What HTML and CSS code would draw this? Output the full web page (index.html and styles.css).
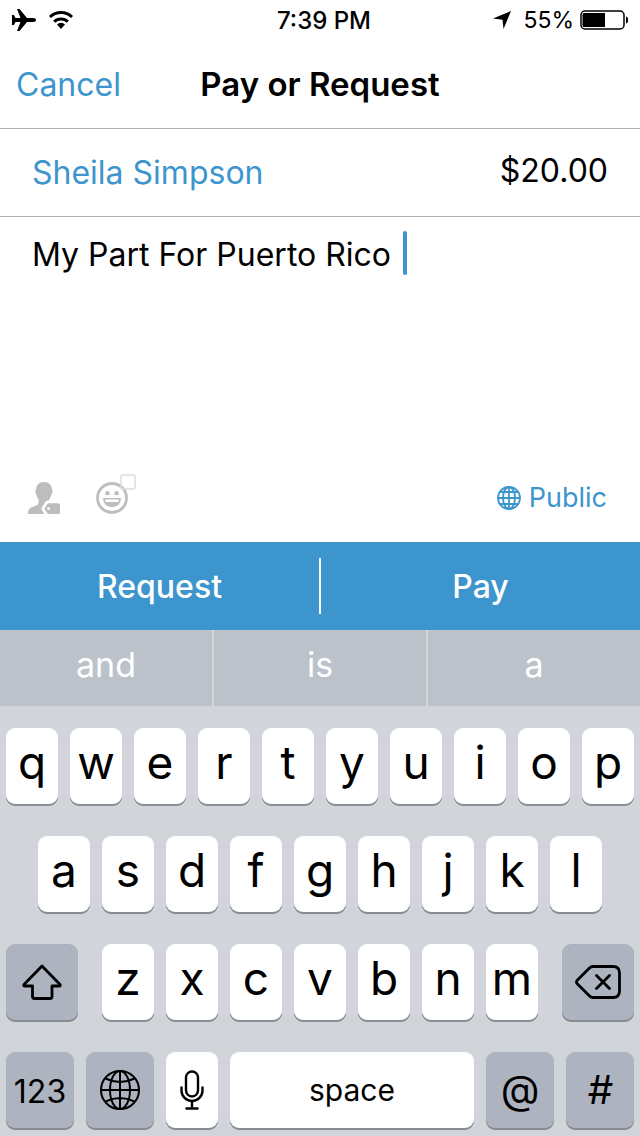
FILE: index.html
```html
<!DOCTYPE html>
<html lang="en">
<head>
<meta charset="utf-8">
<meta name="viewport" content="width=device-width, initial-scale=1">
<title>Pay or Request</title>
<link rel="stylesheet" href="styles.css">
</head>
<body>
<div class="status">
  <div class="status-side">
    <svg width="24" height="24" viewBox="0 0 24 24" aria-label="Airplane mode"><path d="M24 12c0-1.300-1-2-3-2h-6L7.500 1H5l3.500 9H3.500L2 7H0v10h2l1.500-3h5L5 23h2.500L15 14h6c2 0 3-.7 3-2z"/></svg>
    <svg class="wifi" width="26" height="20" viewBox="0 0 26 20" fill="none" stroke="#000" stroke-width="3" aria-label="Wi-Fi"><path d="M2 7a15.500 15.500 0 0 1 22 0M6.200 11.700a9.600 9.600 0 0 1 13.600 0"/><path d="M9 14.500a5.700 5.700 0 0 1 8 0l-4 4.500z" fill="#000" stroke="none"/></svg>
  </div>
  <span class="time">7:39 PM</span>
  <div class="status-side status-right">
    <svg width="18" height="18" viewBox="0 0 18 18" aria-label="Location"><path d="M18 0 10.500 18 9.500 8.800 0 7.500z"/></svg>
    <span class="percent">55%</span>
    <svg width="48" height="20" viewBox="0 0 48 20" aria-label="Battery"><rect x="1" y="1" width="43" height="18" rx="4" fill="none" stroke="#000" stroke-width="1.500"/><path d="M4 3h21v14H4a1.500 1.500 0 0 1-1.500-1.500v-11A1.500 1.500 0 0 1 4 3zM46 6.500c3 1 3 6 0 7z"/></svg>
  </div>
</div>

<header class="header">
  <button class="cancel" type="button">Cancel</button>
  <h1 class="title">Pay or Request</h1>
</header>

<main class="form">
  <div class="recipient-row">
    <button class="recipient" type="button">Sheila Simpson</button>
    <input class="amount" type="text" value="$20.00" aria-label="Amount">
  </div>
  <div class="note">
    <textarea class="note-text" rows="1" aria-label="Note">My Part For Puerto Rico</textarea>
    <span class="caret"></span>
  </div>
  <div class="tools">
    <button class="tool" type="button" aria-label="Tag a friend">
      <svg width="32" height="32" viewBox="0 0 32 32"><path fill="#bdbdbd" d="M16 0c5 0 8 3 8 8 1 .5 1 3-.5 4-.6 3-1.500 4-2.500 5.500V21l7 4v7H0c0-4 1-5.600 4.500-7 3.500-1.200 6-2.200 6-4v-3.500C9.500 16 8.700 14.500 8.200 12c-1.400-1-1.300-3.500-.2-4 0-5 3-8 8-8z"/><path fill="#bdbdbd" stroke="#fff" stroke-width="6" stroke-linejoin="round" paint-order="stroke" d="M20 21.500h10q2 0 2 2V30q0 2-2 2H20l-3.500-5.200z"/><path fill="#bdbdbd" d="M20 21.500h10q2 0 2 2V30q0 2-2 2H20l-3.500-5.200z"/><circle cx="20.500" cy="26.700" r="1.400" fill="#fff"/></svg>
    </button>
    <button class="tool" type="button" aria-label="Add an emoji">
      <svg width="40" height="42" viewBox="0 0 40 42" fill="none"><circle cx="16" cy="26" r="14.500" stroke="#bdbdbd" stroke-width="2.800"/><rect x="25" y="3" width="14" height="14" rx="2" stroke="#dcdcdc" stroke-width="1.500"/><path fill="#bdbdbd" d="M9.200 21.500a2.200 2.400 0 0 1 4.400 0V23H9.200zM18.400 21.500a2.200 2.400 0 0 1 4.400 0V23h-4.400z"/><path d="M7 26h18c-.3 6-4 9-9 9s-8.700-3-9-9z" fill="#bdbdbd"/><path d="M9 27.500h14l-.7 2.500H9.700z" fill="#fff"/></svg>
    </button>
    <button class="audience" type="button">
      <svg width="24" height="24" viewBox="0 0 24 24" fill="none" stroke="#3d95ce" stroke-width="1.800"><circle cx="12" cy="12" r="11"/><ellipse cx="12" cy="12" rx="6" ry="11"/><path d="M12 1v22M1 12h22M3 6h18M3 18h18"/></svg>
      Public
    </button>
  </div>
</main>

<div class="actions">
  <button class="action" type="button">Request</button>
  <span class="divider"></span>
  <button class="action" type="button">Pay</button>
</div>

<div class="suggestions">
  <button class="suggestion" type="button">and</button>
  <button class="suggestion" type="button">is</button>
  <button class="suggestion" type="button">a</button>
</div>

<div class="keyboard">
  <div class="keys keys-top">
    <button class="key" type="button">q</button><button class="key" type="button">w</button><button class="key" type="button">e</button><button class="key" type="button">r</button><button class="key" type="button">t</button><button class="key" type="button">y</button><button class="key" type="button">u</button><button class="key" type="button">i</button><button class="key" type="button">o</button><button class="key" type="button">p</button>
  </div>
  <div class="keys keys-home">
    <button class="key" type="button">a</button><button class="key" type="button">s</button><button class="key" type="button">d</button><button class="key" type="button">f</button><button class="key" type="button">g</button><button class="key" type="button">h</button><button class="key" type="button">j</button><button class="key" type="button">k</button><button class="key" type="button">l</button>
  </div>
  <div class="keys keys-lower">
    <button class="key key-dark" type="button" aria-label="Shift">
      <svg width="40" height="36" viewBox="0 0 40 36" fill="none" stroke="#000" stroke-width="2.800" stroke-linejoin="round"><path d="M20 2 38 20.500q.8 1.500-1 1.500h-7v10.500q0 2-2 2H12.500q-2 0-2-2V22H3q-1.800 0-1-1.500z"/></svg>
    </button>
    <div class="letters">
      <button class="key" type="button">z</button><button class="key" type="button">x</button><button class="key" type="button">c</button><button class="key" type="button">v</button><button class="key" type="button">b</button><button class="key" type="button">n</button><button class="key" type="button">m</button>
    </div>
    <button class="key key-dark" type="button" aria-label="Delete">
      <svg width="46" height="34" viewBox="0 0 46 34" fill="none" stroke="#000" stroke-width="2.800" stroke-linecap="round" stroke-linejoin="round"><path d="M18 1.500h20q6.500 0 6.500 6.500v18q0 6.500-6.500 6.500H18q-2 0-3.500-1.500L2 18.500q-1-1.500 0-3L14.500 3Q16 1.500 18 1.500zM21.500 10.500l13 13M34.500 10.500l-13 13"/></svg>
    </button>
  </div>
  <div class="keys keys-bottom">
    <button class="key key-dark key-word key-numbers" type="button">123</button>
    <button class="key key-dark" type="button" aria-label="Next keyboard">
      <svg width="40" height="40" viewBox="0 0 40 40" fill="none" stroke="#000" stroke-width="2"><circle cx="20" cy="20" r="19"/><ellipse cx="20" cy="20" rx="10" ry="19"/><path d="M20 1v38M1 20h38M5.500 8.500q14.500 7 29 0M5.500 31.500q14.500-7 29 0"/></svg>
    </button>
    <button class="key key-icon" type="button" aria-label="Dictate">
      <svg width="24" height="40" viewBox="0 0 24 40" fill="none" stroke="#000" stroke-width="2.400" stroke-linecap="round"><rect x="6" y="1.500" width="12" height="25" rx="6"/><path d="M1.500 17.500v3a10.500 10.500 0 0 0 21 0v-3M12 31v7M6.500 38.500h11"/></svg>
    </button>
    <button class="key key-word" type="button">space</button>
    <button class="key key-dark key-symbol" type="button">@</button>
    <button class="key key-dark key-symbol key-hash" type="button">#</button>
  </div>
</div>
</body>
</html>
```
FILE: styles.css
```css
* {
  box-sizing: border-box;
}

body {
  margin: 0;
  min-height: 100vh;
  display: flex;
  flex-direction: column;
  background: #fff;
  color: #000;
  font-family: Inter, "Liberation Sans", sans-serif;
  font-size: 32px;
}

button,
input,
textarea {
  margin: 0;
  padding: 0;
  border: 0;
  background: none;
  color: inherit;
  font: inherit;
}

svg {
  display: block;
  flex: none;
}

.status {
  display: grid;
  grid-template-columns: 1fr auto 1fr;
  align-items: center;
  height: 40px;
  padding: 0 12px;
  font-size: 23px;
}

.status-side {
  display: flex;
  align-items: center;
}

.wifi {
  margin-left: 12px;
}

.status-right {
  justify-content: flex-end;
}

.time {
  padding-left: 8px;
  font-size: 24px;
  font-weight: 500;
}

.percent {
  margin: 0 6px 0 12px;
}

.header {
  display: grid;
  grid-template-columns: 1fr auto 1fr;
  align-items: center;
  height: 89px;
  padding: 0 16px;
  border-bottom: 1px solid #b2b2b2;
}

.cancel {
  justify-self: start;
  color: #3d95ce;
}

.title {
  margin: 0;
  font-size: 33px;
  font-weight: 600;
}

.form {
  flex: 1;
  display: flex;
  flex-direction: column;
}

.recipient-row {
  display: flex;
  align-items: center;
  justify-content: space-between;
  height: 88px;
  padding: 0 32px;
  border-bottom: 1px solid #b2b2b2;
}

.recipient {
  color: #3d95ce;
}

.amount {
  width: 200px;
  padding-bottom: 4px;
  text-align: right;
}

.note {
  flex: 1;
  display: flex;
  align-items: flex-start;
  gap: 12px;
  padding: 14px 32px;
}

.note-text {
  field-sizing: content;
  padding-top: 2px;
  line-height: 44px;
  resize: none;
  overflow: hidden;
}

.caret {
  width: 4px;
  height: 44px;
  border-radius: 2px;
  background: #3d95ce;
}

.tools {
  display: flex;
  align-items: flex-end;
  gap: 36px;
  padding: 0 33px 28px 28px;
}

.audience {
  display: flex;
  align-items: center;
  gap: 8px;
  margin-left: auto;
  color: #3d95ce;
  font-size: 27px;
  line-height: 32px;
}

.actions {
  display: grid;
  grid-template-columns: 1fr 2px 1fr;
  height: 88px;
  padding: 16px 0;
  background: #3d95ce;
  color: #fff;
}

.action {
  font-weight: 500;
}

.divider {
  background: #fff;
}

.suggestions {
  display: grid;
  grid-template-columns: repeat(3, 1fr);
  gap: 2px;
  height: 76px;
  background: #d1d5da;
  color: #fff;
}

.suggestion {
  padding-bottom: 8px;
  background: #bbc2ca;
  font-size: 34px;
}

.keyboard {
  display: grid;
  gap: 32px;
  padding: 22px 6px 8px;
  background: #d1d5da;
}

.keys,
.letters {
  display: grid;
  gap: 12px;
}

.keys-top {
  grid-template-columns: repeat(10, 1fr);
}

.keys-home {
  grid-template-columns: repeat(9, 1fr);
  padding: 0 32px;
}

.keys-lower {
  grid-template-columns: 72fr 436fr 72fr;
  gap: 24px;
}

.letters {
  grid-template-columns: repeat(7, 1fr);
}

.keys-bottom {
  grid-template-columns: 68fr 68fr 52fr 244fr 68fr 68fr;
}

.key {
  display: flex;
  align-items: center;
  justify-content: center;
  min-width: 0;
  height: 76px;
  padding-bottom: 8px;
  border-radius: 9px;
  background: #fff;
  box-shadow: 0 2px 0 #888b90;
  font-size: 46px;
}

.key-dark,
.key-icon,
.key-word {
  padding-bottom: 0;
}

.key-dark {
  background: #adb4c0;
}

.key-word {
  font-size: 30px;
}

.key-numbers {
  padding-top: 2px;
  font-size: 32px;
}

.key-symbol {
  padding-bottom: 2px;
  font-size: 40px;
}

.key-hash {
  font-style: italic;
}
```
